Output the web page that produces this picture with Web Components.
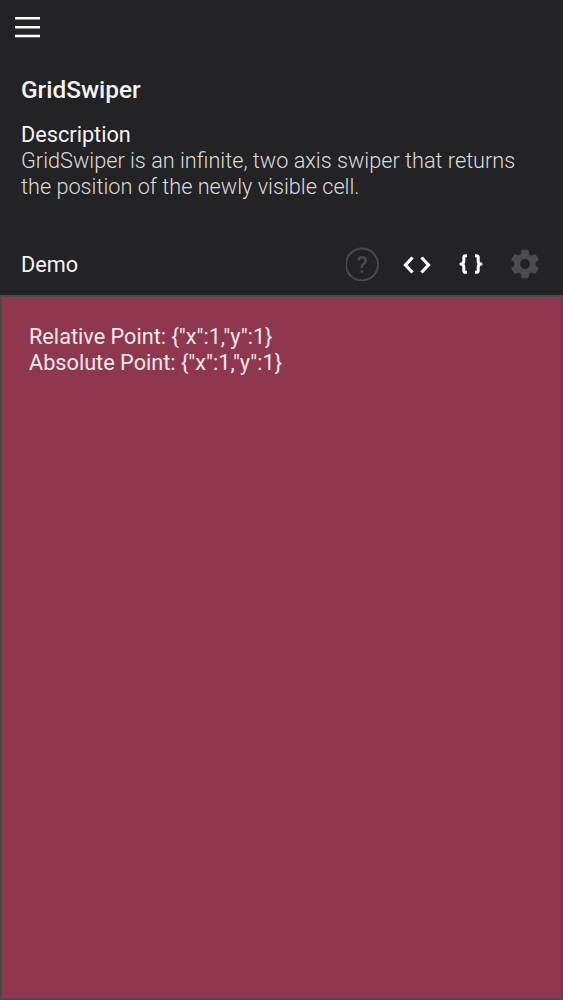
<!DOCTYPE html>
<html>
<head>
<meta charset="utf-8">
<title>GridSwiper</title>
<style>
    html, body {
        margin: 0;
        height: 100%;
        background: #232225;
    }
    body {
        font-family: Roboto, "Liberation Sans", sans-serif;
    }
</style>
</head>
<body>
<demo-page></demo-page>

<script>
class AppBar extends HTMLElement {
    constructor() {
        super();
        this.attachShadow({ mode: "open" });
        this.shadowRoot.innerHTML = `
            <style>
                :host {
                    display: block;
                    height: 54px;
                    padding: 15px 0 0 15px;
                    box-sizing: border-box;
                }
                svg {
                    display: block;
                }
            </style>
            <svg width="25" height="24" viewBox="0 0 25 24">
                <path d="M0 3.200h25M0 12.300h25M0 21h25" stroke="#fff" stroke-width="2.400" fill="none"/>
            </svg>
        `;
    }
}
if (!customElements.get("app-bar"))
    customElements.define("app-bar", AppBar);

class PageHeader extends HTMLElement {
    constructor() {
        super();
        this.attachShadow({ mode: "open" });
        this.shadowRoot.innerHTML = `
            <style>
                :host {
                    display: block;
                    padding: 21px 21px 0;
                    color: #f4f4f4;
                }
                h1 {
                    margin: 0;
                    font-size: 24.400px;
                    line-height: 29px;
                    font-weight: 500;
                }
                h2 {
                    margin: 18px 0 0;
                    font-size: 21.700px;
                    line-height: 26px;
                    font-weight: 400;
                }
                p {
                    margin: 0;
                    font-size: 21.700px;
                    line-height: 26px;
                    font-weight: 300;
                    color: #dcdcdc;
                }
            </style>
            <h1><slot name="title"></slot></h1>
            <h2>Description</h2>
            <p><slot></slot></p>
        `;
    }
}
if (!customElements.get("page-header"))
    customElements.define("page-header", PageHeader);

class DemoToolbar extends HTMLElement {
    constructor() {
        super();
        this.attachShadow({ mode: "open" });
        this.shadowRoot.innerHTML = `
            <style>
                :host {
                    display: flex;
                    align-items: center;
                    justify-content: space-between;
                    height: 57px;
                    margin-top: 38px;
                    padding: 0 21px 5px;
                    box-sizing: border-box;
                    color: #f4f4f4;
                    font-size: 21.700px;
                }
                .icons {
                    display: flex;
                    gap: 20px;
                }
                svg {
                    display: block;
                    width: 34px;
                    height: 34px;
                }
                .help-mark {
                    font: 500 23px Roboto, "Liberation Sans", sans-serif;
                    fill: #4a4a4c;
                }
            </style>
            <span>Demo</span>
            <div class="icons">
                <svg viewBox="0 0 34 34">
                    <circle cx="16" cy="17.500" r="16" fill="none" stroke="#4a4a4c" stroke-width="2"/>
                    <text class="help-mark" x="16" y="26" text-anchor="middle">?</text>
                </svg>
                <svg viewBox="0 0 34 34">
                    <path d="M12.500 10.500 5.500 18l7 7.500M21.500 10.500l7 7.500-7 7.500" fill="none" stroke="#fff" stroke-width="3.200"/>
                </svg>
                <svg viewBox="0 0 34 34">
                    <path d="M13 8.700h-1.300c-1.300 0-1.900.6-1.900 1.900v3.800c0 1.300-.9 2.100-2.800 2.600 1.900.5 2.800 1.300 2.800 2.600v3.800c0 1.300.6 1.900 1.900 1.900H13M21 8.700h1.300c1.300 0 1.900.6 1.900 1.900v3.800c0 1.300.9 2.100 2.800 2.600-1.900.5-2.800 1.300-2.800 2.600v3.800c0 1.300-.6 1.900-1.900 1.900H21" fill="none" stroke="#fff" stroke-width="3" stroke-linejoin="round"/>
                </svg>
                <svg viewBox="0 0 24 24">
                    <path fill="#4c4c4e" d="M19.430 12.980c.04-.32.07-.64.07-.98s-.03-.66-.07-.98l2.110-1.650c.19-.15.24-.42.12-.64l-2-3.460c-.12-.22-.39-.3-.61-.22l-2.490 1c-.52-.4-1.080-.73-1.690-.98l-.38-2.650C14.460 2.180 14.250 2 14 2h-4c-.25 0-.46.18-.49.42l-.38 2.650c-.61.25-1.170.59-1.690.98l-2.490-1c-.23-.09-.49 0-.61.22l-2 3.460c-.13.22-.07.49.12.64l2.110 1.650c-.04.32-.07.65-.07.98s.03.66.07.98l-2.110 1.650c-.19.15-.24.42-.12.64l2 3.460c.12.22.39.3.61.22l2.490-1c.52.4 1.080.73 1.690.98l.38 2.650c.03.24.24.42.49.42h4c.25 0 .46-.18.49-.42l.38-2.650c.61-.25 1.170-.59 1.690-.98l2.490 1c.23.09.49 0 .61-.22l2-3.460c.12-.22.07-.49-.12-.64l-2.110-1.650zM12 15.500c-1.930 0-3.500-1.570-3.500-3.500s1.570-3.500 3.500-3.500 3.500 1.570 3.500 3.500-1.570 3.500-3.500 3.500z"/>
                </svg>
            </div>
        `;
    }
}
if (!customElements.get("demo-toolbar"))
    customElements.define("demo-toolbar", DemoToolbar);

class SwiperCell extends HTMLElement {
    constructor() {
        super();
        this.attachShadow({ mode: "open" });
        this.shadowRoot.innerHTML = `
            <style>
                :host {
                    display: block;
                    flex: 1;
                    padding: 27px 27px;
                    box-sizing: border-box;
                    background: #8f374e;
                    border: 2px solid #4a4a4c;
                    color: #f6e9ec;
                    font-size: 21.700px;
                    line-height: 26px;
                }
            </style>
            <slot></slot>
        `;
    }

    setPoints(relative, absolute) {
        this.textContent = "";
        [["Relative Point", relative], ["Absolute Point", absolute]].forEach(([label, point]) => {
            const line = document.createElement("div");
            line.textContent = `${label}: ${JSON.stringify(point)}`;
            this.appendChild(line);
        });
    }
}
if (!customElements.get("swiper-cell"))
    customElements.define("swiper-cell", SwiperCell);

class DemoPage extends HTMLElement {
    constructor() {
        super();
        this.attachShadow({ mode: "open" });
        this.shadowRoot.innerHTML = `
            <style>
                :host {
                    display: flex;
                    flex-direction: column;
                    height: 1000px;
                    background: #232225;
                }
            </style>
            <app-bar></app-bar>
            <page-header>
                <span slot="title">GridSwiper</span>
                GridSwiper is an infinite, two axis swiper that returns the position of the newly visible cell.
            </page-header>
            <demo-toolbar></demo-toolbar>
            <swiper-cell></swiper-cell>
        `;
        this.shadowRoot.querySelector("swiper-cell").setPoints({ x: 1, y: 1 }, { x: 1, y: 1 });
    }
}
if (!customElements.get("demo-page"))
    customElements.define("demo-page", DemoPage);
</script>
</body>
</html>
